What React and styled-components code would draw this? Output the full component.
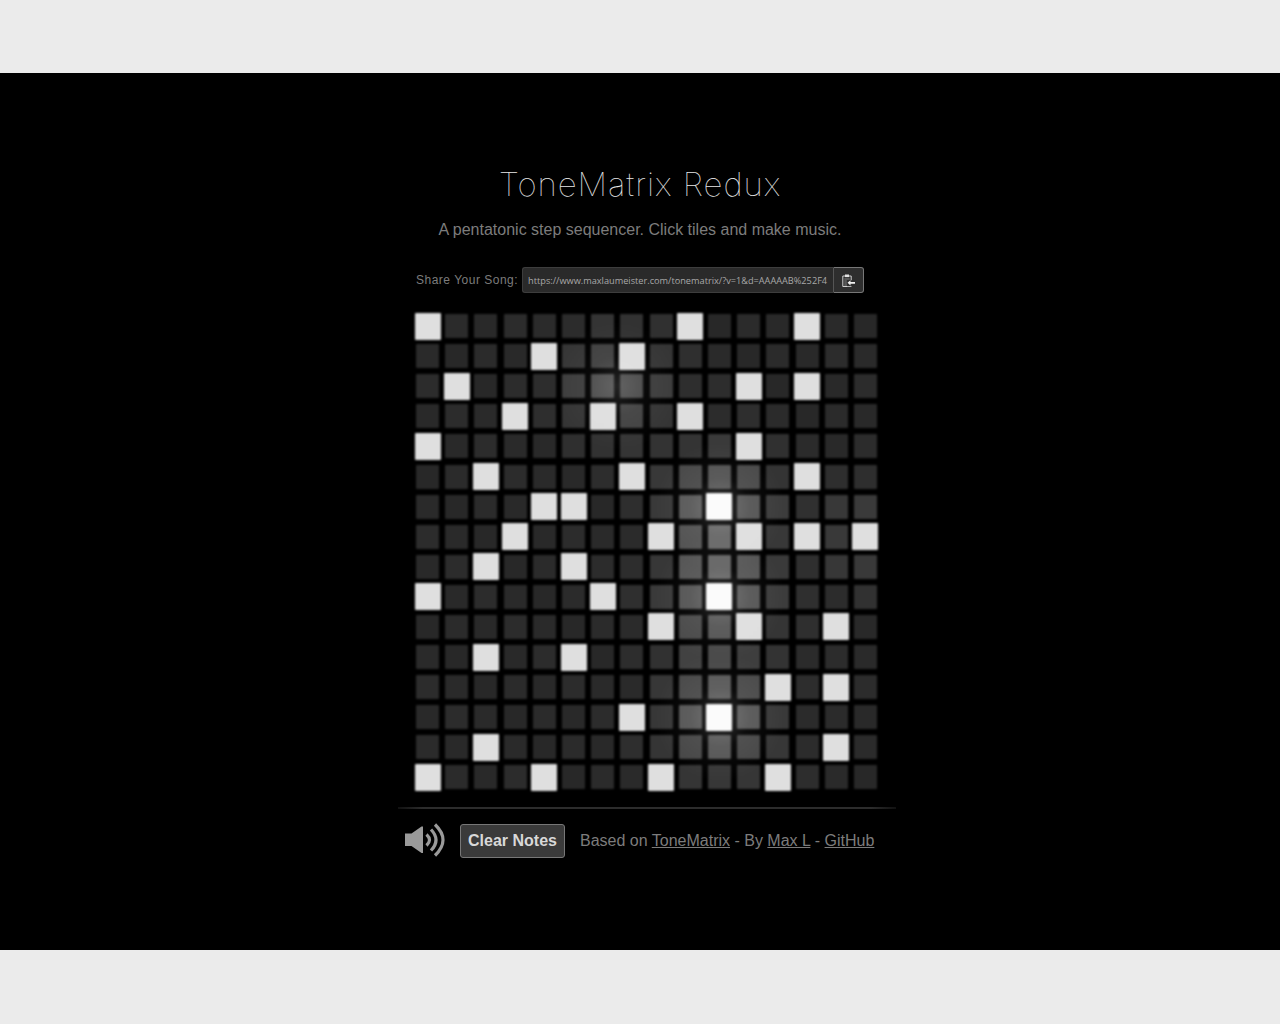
import styled, { createGlobalStyle } from "styled-components";

const GlobalStyle = createGlobalStyle`
    html, body {
        margin: 0;
        padding: 0;
        background: #ebebeb;
    }
`

const notes = [
    [0, 9, 13],
    [4, 7],
    [1, 11, 13],
    [3, 6, 9],
    [0, 11],
    [2, 7, 13],
    [4, 5, 10],
    [3, 8, 11, 13, 15],
    [2, 5],
    [0, 6, 10],
    [8, 11, 14],
    [2, 5],
    [12, 14],
    [7, 10],
    [2, 14],
    [0, 4, 8, 12],
];

// the tiles that are playing right now, they light up whatever is around them
const playing = [
    { row: 6, col: 10, power: 58, glow: 0.2 },
    { row: 9, col: 10, power: 58, glow: 0.2 },
    { row: 13, col: 10, power: 58, glow: 0.2 },
    { row: 2, col: 6.5, power: 36, glow: 0.14 },
    { row: 7, col: 15, power: 22, glow: 0 },
];

const tileColor = function (row, col) {
    if (notes[row].includes(col)) {
        return playing.some(p => p.row === row && p.col === col && p.power > 50) ? '#fbfbfb' : '#dfdfdf';
    }
    let level = 42 + ((row * 7 + col * 13) % 5) - 2;
    playing.forEach(p => {
        const dist = Math.hypot(row - p.row, col - p.col);
        level += p.power * Math.exp(-dist * dist / 3);
    });
    level = Math.round(Math.min(level, 120));
    return `rgb(${level}, ${level}, ${level})`;
}

const App = function () {
    return (
        <>
            <GlobalStyle />
            <Page>
                <Title>ToneMatrix Redux</Title>
                <Subtitle>A pentatonic step sequencer. Click tiles and make music.</Subtitle>
                <ShareRow>
                    <ShareLabel>Share Your Song:</ShareLabel>
                    <ShareBox>
                        <ShareInput readOnly value="https://www.maxlaumeister.com/tonematrix/?v=1&d=AAAAAB%252F4" />
                        <CopyButton aria-label="Copy">
                            <svg width="13" height="13" viewBox="0 0 13 13" fill="none">
                                <path d="M3.5 2H.8v10.5h8.4V2H6.5" stroke="#cfcfcf" strokeWidth="1" />
                                <path d="M3 .5h4v2.6H3z" fill="#e2e2e2" />
                                <path d="M2.3 5h5.4M2.3 7h2.5M2.3 9h2.5M2.3 11h5.4" stroke="#9a9a9a" strokeWidth="0.8" />
                                <path d="M5 6.2h8v6H5z" fill="#2e2e2e" />
                                <path d="M5.5 8.8l3-2.5v1.6H13v1.9H8.500v1.600z" fill="#f2f2f2" />
                            </svg>
                        </CopyButton>
                    </ShareBox>
                </ShareRow>
                <Board>
                    <Matrix>
                        {notes.map((row, r) => Array.from({ length: 16 }, (_, c) => (
                            <Tile key={`${r}-${c}`} $on={row.includes(c)} style={{ background: tileColor(r, c) }} />
                        )))}
                        {playing.filter(p => p.glow > 0).map(p => (
                            <Glow
                                key={`${p.row}-${p.col}`}
                                style={{
                                    left: `${(p.col + 0.5) * 29.2}px`,
                                    top: `${(p.row + 0.5) * 30.1}px`,
                                    opacity: p.glow,
                                }}
                            />
                        ))}
                    </Matrix>
                    <Divider />
                    <Footer>
                        <VolumeIcon width="41" height="35" viewBox="0 0 41 35">
                            <path d="M0 10.500h6.500L16.500 3.500h1.500V30h-1.500L6.500 23H0z" fill="#9a9a9a" />
                            <VolumeArc d="M21.500 11.500Q27.500 17 21.500 22.500" />
                            <VolumeArc d="M26 6.500Q36 17 26 27.500" />
                            <VolumeArc d="M30 1.500Q46 17 30 32.500" />
                        </VolumeIcon>
                        <ClearButton>Clear Notes</ClearButton>
                        <Credits>
                            Based on <a href="#tonematrix">ToneMatrix</a> - By <a href="#max">Max L</a> - <a href="#github">GitHub</a>
                        </Credits>
                    </Footer>
                </Board>
            </Page>
        </>
    )
}

export default App;

const Page = styled.main`
    margin-top: 73px;
    height: 877px;
    background: #000;
    display: flex;
    flex-direction: column;
    align-items: center;
    font-family: "Liberation Sans", Arial, sans-serif;
    overflow: hidden;
`

const Title = styled.h1`
    margin: 92px 0 0;
    font-family: Inter, "Liberation Sans", sans-serif;
    font-weight: 100;
    font-size: 33px;
    line-height: 38px;
    letter-spacing: 0.95px;
    color: #e8e8e8;
    white-space: nowrap;
`

const Subtitle = styled.p`
    margin: 18px 0 0;
    font-size: 16px;
    line-height: 18px;
    color: #7c7c7c;
`

const ShareRow = styled.div`
    margin-top: 28px;
    width: 448px;
    display: flex;
    align-items: center;
    gap: 4px;
`

const ShareLabel = styled.label`
    font-size: 12px;
    letter-spacing: 0.5px;
    color: #7c7c7c;
    white-space: nowrap;
`

const ShareBox = styled.div`
    display: flex;
    height: 26px;
`

const ShareInput = styled.input`
    box-sizing: border-box;
    width: 312px;
    height: 26px;
    padding: 0 3px 0 5px;
    background: #2a2a2a;
    border: 1px solid #3d3d3d;
    border-right-color: #555;
    border-radius: 3px 0 0 3px;
    color: #a8a8a8;
    font-family: "Open Sans", sans-serif;
    font-size: 9.2px;

    &:focus {
        outline: none;
    }
`

const CopyButton = styled.button`
    box-sizing: border-box;
    width: 30px;
    height: 26px;
    padding: 1px 0 0;
    display: flex;
    align-items: center;
    justify-content: center;
    background: #2e2e2e;
    border: 1px solid #777;
    border-left: none;
    border-radius: 0 3px 3px 0;
    cursor: pointer;
`

const Board = styled.div`
    margin: 0 0 0 13px;
    display: flex;
    flex-direction: column;
    align-items: center;
`

const Matrix = styled.div`
    position: relative;
    margin-top: 18px;
    display: grid;
    grid-template-columns: repeat(16, 29.2px);
    grid-template-rows: repeat(16, 30.1px);
    justify-items: center;
    align-items: center;
    filter: blur(1px);
`

const Tile = styled.div`
    width: ${props => props.$on ? '26px' : '23px'};
    height: ${props => props.$on ? '27px' : '24px'};
    border-radius: 1px;
`

const Glow = styled.div`
    position: absolute;
    width: 130px;
    height: 130px;
    margin: -65px 0 0 -65px;
    background: radial-gradient(closest-side, #fff, rgba(255, 255, 255, 0.25) 45%, rgba(255, 255, 255, 0));
    pointer-events: none;
`

const Divider = styled.hr`
    margin: 14px 0 0;
    width: 498px;
    height: 2px;
    border: none;
    background: linear-gradient(to right, #111, #2c2c2c 5%, #2c2c2c 95%, #111);
`

const Footer = styled.div`
    margin-top: 14px;
    width: 490px;
    height: 36px;
    display: flex;
    align-items: center;
`

const VolumeIcon = styled.svg`
    flex: none;
    margin-left: 3.5px;
`

const VolumeArc = styled.path`
    fill: none;
    stroke: #9a9a9a;
    stroke-width: 3.2;
`

const ClearButton = styled.button`
    box-sizing: border-box;
    margin-left: 14px;
    width: 105px;
    height: 34px;
    padding: 0;
    background: #3a3a3a;
    border: 1px solid #777;
    border-radius: 3px;
    color: #d8d8d8;
    font-family: "Liberation Sans", Arial, sans-serif;
    font-size: 16px;
    font-weight: 700;
    cursor: pointer;
`

const Credits = styled.span`
    margin-left: 15px;
    font-size: 16px;
    color: #7c7c7c;
    white-space: nowrap;

    a {
        color: #7c7c7c;
    }
`
